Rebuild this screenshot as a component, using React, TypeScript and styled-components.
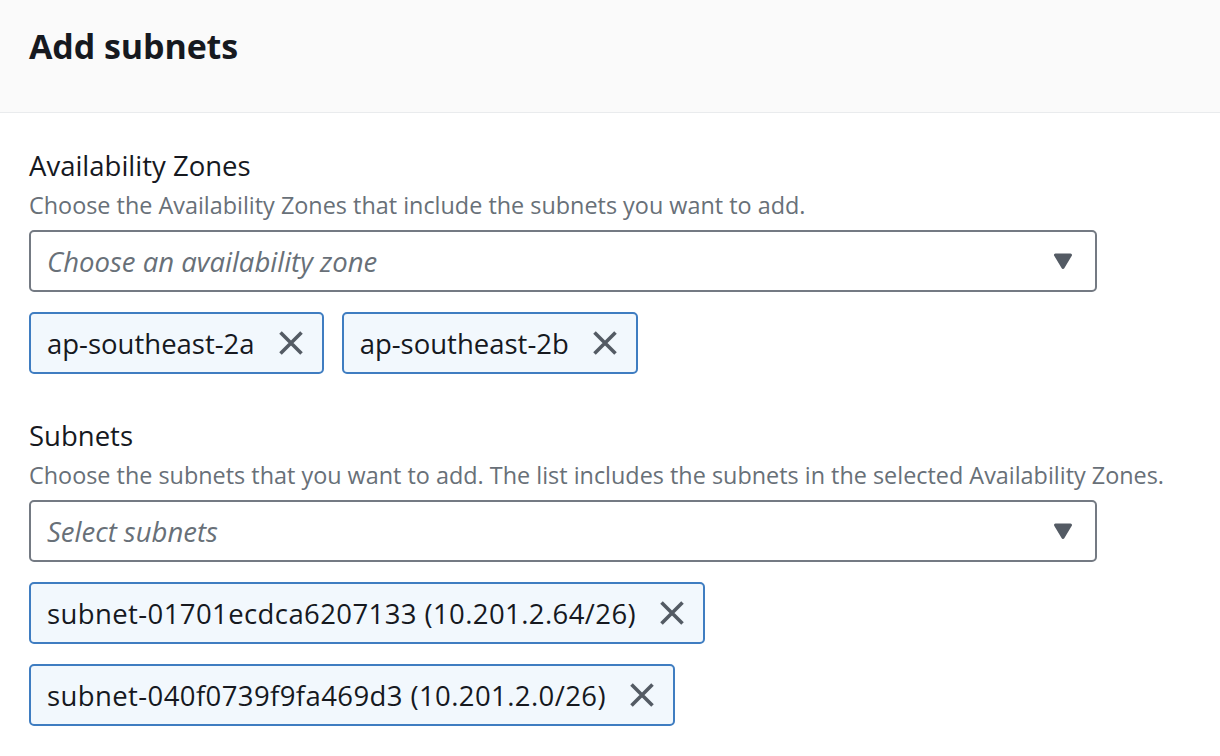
import styled, {createGlobalStyle} from "styled-components";

const GlobalStyle = createGlobalStyle`
    html, body {
        margin: 0;
        padding: 0;
        background: #ffffff;
    }

    body {
        font-family: "Open Sans", "Noto Sans", sans-serif;
        color: #16191f;
    }
`;

interface FieldInfo {
    label: string;
    description: string;
    placeholder: string;
    tokens: string[];
    stacked: boolean;
}

const fields: FieldInfo[] = [
    {
        label: "Availability Zones",
        description: "Choose the Availability Zones that include the subnets you want to add.",
        placeholder: "Choose an availability zone",
        tokens: ["ap-southeast-2a", "ap-southeast-2b"],
        stacked: false,
    },
    {
        label: "Subnets",
        description: "Choose the subnets that you want to add. The list includes the subnets in the selected Availability Zones.",
        placeholder: "Select subnets",
        tokens: ["subnet-01701ecdca6207133 (10.201.2.64/26)", "subnet-040f0739f9fa469d3 (10.201.2.0/26)"],
        stacked: true,
    },
];

const CaretIcon = () => (
    <svg width="20" height="17" viewBox="0 0 20 17">
        <path d="M2.5 2 L17.5 2 L10 14.5 Z" fill="#545b64" stroke="#545b64" strokeWidth="3" strokeLinejoin="round"/>
    </svg>
);

const CloseIcon = () => (
    <svg width="26" height="26" viewBox="0 0 26 26">
        <path d="M2.5 2.5 L23.5 23.5 M23.5 2.5 L2.5 23.5" stroke="#545b64" strokeWidth="3.6" strokeLinecap="butt"/>
    </svg>
);

const App = () => {
    return (
        <>
            <GlobalStyle/>
            <Panel>
                <Header>
                    <Title>Add subnets</Title>
                </Header>
                <Body>
                    {fields.map((field) => (
                        <Field key={field.label}>
                            <Label>{field.label}</Label>
                            <Description>{field.description}</Description>
                            <Select>
                                <Placeholder>{field.placeholder}</Placeholder>
                                <CaretIcon/>
                            </Select>
                            <Tokens $stacked={field.stacked}>
                                {field.tokens.map((token) => (
                                    <Token key={token}>
                                        <TokenText $wide={field.stacked}>{token}</TokenText>
                                        <Dismiss aria-label={`Remove ${token}`}>
                                            <CloseIcon/>
                                        </Dismiss>
                                    </Token>
                                ))}
                            </Tokens>
                        </Field>
                    ))}
                </Body>
            </Panel>
        </>
    );
};

export default App;

const Panel = styled.div`
    width: 1220px;
    min-height: 756px;
    background: #ffffff;
`;

const Header = styled.div`
    height: 113px;
    background: #fafafa;
    border-bottom: 1px solid #e9ebed;
    padding: 23px 29px 0 29px;
    box-sizing: border-box;
`;

const Title = styled.h2`
    margin: 0;
    font-size: 34px;
    line-height: 46px;
    font-weight: 700;
    letter-spacing: -0.1px;
    color: #16191f;
`;

const Body = styled.div`
    padding: 33px 29px 0 29px;
    display: flex;
    flex-direction: column;
    gap: 42px;
`;

const Field = styled.div`
    display: flex;
    flex-direction: column;
`;

const Label = styled.div`
    font-size: 27.5px;
    line-height: 40px;
    color: #16191f;
`;

const Description = styled.div`
    font-size: 23.4px;
    line-height: 32px;
    color: #687078;
    margin: 3px 0 9px 0;
`;

const Select = styled.div`
    width: 1068px;
    height: 62px;
    box-sizing: border-box;
    border: 2px solid #747a83;
    border-radius: 5px;
    display: flex;
    align-items: center;
    justify-content: space-between;
    padding: 0 22px 0 16px;
`;

const Placeholder = styled.span`
    font-size: 27.5px;
    font-style: italic;
    color: #687078;
`;

const Tokens = styled.div<{ $stacked: boolean }>`
    display: flex;
    flex-direction: ${({$stacked}) => ($stacked ? "column" : "row")};
    align-items: flex-start;
    gap: ${({$stacked}) => ($stacked ? "20px" : "18px")};
    margin-top: 20px;
`;

const Token = styled.div`
    height: 62px;
    box-sizing: border-box;
    display: flex;
    align-items: center;
    gap: 23px;
    padding: 0 18px 0 16px;
    background: #f2f8fd;
    border: 2px solid #3f7dc1;
    border-radius: 5px;
`;

const TokenText = styled.span<{ $wide: boolean }>`
    font-size: 27.5px;
    letter-spacing: ${({$wide}) => ($wide ? "0.4px" : "0")};
    color: #16191f;
`;

const Dismiss = styled.span`
    display: flex;
    align-items: center;
`;
